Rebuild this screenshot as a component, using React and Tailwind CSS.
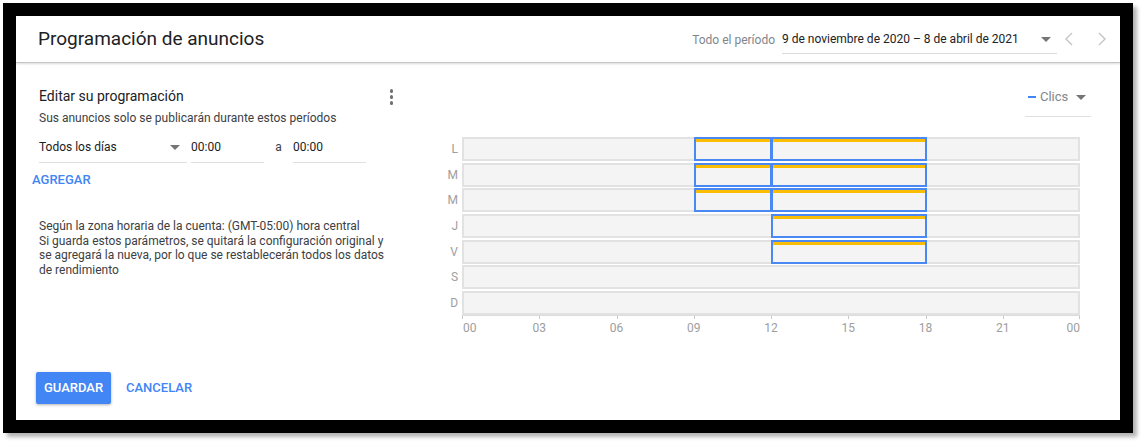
import React from "react";

const days = [
  { d: "L", mt: "mt-0", blocks: [[9, 12], [12, 18]] },
  { d: "M", mt: "mt-[2px]", blocks: [[9, 12], [12, 18]] },
  { d: "M", mt: "mt-[1px]", blocks: [[9, 12], [12, 18]] },
  { d: "J", mt: "mt-[2px]", blocks: [[12, 18]] },
  { d: "V", mt: "mt-[2px]", blocks: [[12, 18]] },
  { d: "S", mt: "mt-[1px]", blocks: [] },
  { d: "D", mt: "mt-[2px]", blocks: [] },
];

const ticks = [0, 3, 6, 9, 12, 15, 18, 21, 24];

function Caret({ className = "" }) {
  return (
    <svg width="10" height="5" viewBox="0 0 10 5" className={className}>
      <path d="M0 0 L10 0 L5 5 Z" fill="#757575" />
    </svg>
  );
}

function Chevron({ dir }) {
  return (
    <svg width="24" height="24" viewBox="0 0 24 24">
      {dir === "left" ? (
        <polyline points="15,6 9,12 15,18" fill="none" stroke="#c4c4c4" strokeWidth="1.4" />
      ) : (
        <polyline points="9,6 15,12 9,18" fill="none" stroke="#c4c4c4" strokeWidth="1.4" />
      )}
    </svg>
  );
}

export default function App() {
  return (
    <div className="w-[1143px] h-[443px] bg-white pt-[3px] pl-[3px]" style={{ fontFamily: "Roboto, 'Liberation Sans', sans-serif" }}>
      <div className="w-[1130px] h-[430px] bg-black p-[13px] shadow-[4px_4px_4px_rgba(0,0,0,0.3)]">
        <div className="w-[1104px] h-[404px] bg-white flex flex-col">
          {/* Header */}
          <div className="h-[47px] flex items-center border-b border-[#c6c6c6] shadow-[0_1px_2px_rgba(0,0,0,0.15)] pl-[22px] pr-[6px] shrink-0">
            <div className="text-[19px] leading-[24px] text-[#202124] flex-1">Programación de anuncios</div>
            <div className="text-[12px] leading-[16px] text-[#80868b] mt-[1px]">Todo el período</div>
            <div className="ml-[7px] w-[275px] flex items-center pb-[6px] border-b border-[#dadce0] mt-[7px] pr-[6px]">
              <span className="text-[12px] leading-[16px] text-[#202124] flex-1">9 de noviembre de 2020 – 8 de abril de 2021</span>
              <Caret />
            </div>
            <div className="flex items-center gap-[9px] ml-0">
              <Chevron dir="left" />
              <Chevron dir="right" />
            </div>
          </div>

          {/* Body */}
          <div className="flex flex-1">
            {/* Left column */}
            <div className="w-[384px] pl-[23px] pr-[5px] flex flex-col">
              <div className="mt-[23px] flex items-center justify-between">
                <div className="text-[14px] leading-[20px] text-[#202124]">Editar su programación</div>
                <div className="flex flex-col gap-[2.5px] mt-[2px] mr-[2px]">
                  <span className="w-[3.5px] h-[3.5px] rounded-full bg-[#6f6f6f]" />
                  <span className="w-[3.5px] h-[3.5px] rounded-full bg-[#6f6f6f]" />
                  <span className="w-[3.5px] h-[3.5px] rounded-full bg-[#6f6f6f]" />
                </div>
              </div>
              <div className="mt-[4px] text-[12px] leading-[16px] text-[#3c4043]">Sus anuncios solo se publicarán durante estos períodos</div>

              <div className="mt-[12px] flex items-end text-[12px] leading-[18px] text-[#202124]">
                <div className="w-[148px] flex items-center pb-[6px] border-b border-[#e0e0e0] pr-[7px]">
                  <span className="flex-1">Todos los días</span>
                  <Caret />
                </div>
                <div className="ml-[4px] w-[73px] pb-[6px] border-b border-[#e0e0e0]">00:00</div>
                <div className="w-[29px] pb-[7px] text-center text-[#3c4043]">a</div>
                <div className="w-[73px] pb-[6px] border-b border-[#e0e0e0]">00:00</div>
              </div>

              <div className="mt-[9px] -ml-[7px] text-[13px] leading-[16px] font-medium text-[#4285f4]">AGREGAR</div>

              <div className="mt-[31px] text-[12px] leading-[14.5px] text-[#3c4043]">
                Según la zona horaria de la cuenta: (GMT-05:00) hora central
                <br />
                Si guarda estos parámetros, se quitará la configuración original y
                <br />
                se agregará la nueva, por lo que se restablecerán todos los datos
                <br />
                de rendimiento
              </div>
            </div>

            {/* Chart */}
            <div className="flex-1 flex flex-col pl-[40px] pr-[40px]">
              <div className="flex justify-end -mr-[11px] mt-[25px]">
                <div className="w-[66px] flex items-center pb-[10px] border-b border-[#e0e0e0] pl-[3px]">
                  <span className="w-[8px] h-[2.5px] bg-[#4285f4] mr-[4px]" />
                  <span className="text-[13px] leading-[18px] text-[#80868b]">Clics</span>
                  <Caret className="ml-[8px]" />
                </div>
              </div>

              <div className="mt-[20px] flex flex-col">
                {days.map((row, i) => (
                  <div key={i} className={`flex items-center ${row.mt}`}>
                    <div className="w-[18px] text-right text-[12px] leading-[14px] text-[#9e9e9e] mr-[4px]">{row.d}</div>
                    <div className="relative flex-1 h-[24px] border-2 border-[#e2e2e2] bg-[#f4f4f4]">
                      <div className="absolute -inset-[2px]">
                        {row.blocks.map(([s, e], j) => (
                          <div
                            key={j}
                            className="absolute top-0 bottom-0 border-2 border-[#4a89f3] flex flex-col"
                            style={{ left: `${(s / 24) * 100}%`, width: `calc(${((e - s) / 24) * 100}% + 1px)` }}
                          >
                            <div className="h-[3px] shrink-0 bg-[#fbbc04]" />
                          </div>
                        ))}
                      </div>
                    </div>
                  </div>
                ))}
              </div>

              {/* Axis */}
              <div className="flex">
                <div className="w-[22px]" />
                <div className="relative flex-1 h-[24px] border-t border-[#dcdcdc]">
                  {ticks.map((t, i) => (
                    <React.Fragment key={i}>
                      <div className="absolute top-0 w-px h-[3px] bg-[#c8c8c8]" style={{ left: `calc(${(t / 24) * 100}% - ${t === 24 ? 1 : 0}px)` }} />
                      <div
                        className="absolute top-[5px] text-[12px] leading-[14px] text-[#9e9e9e]"
                        style={{
                          left: `${(t / 24) * 100}%`,
                          transform: t === 0 ? "translateX(1px)" : t === 24 ? "translateX(-100%)" : "translateX(-50%)",
                        }}
                      >
                        {String(t % 24).padStart(2, "0")}
                      </div>
                    </React.Fragment>
                  ))}
                </div>
              </div>
            </div>
          </div>

          {/* Footer */}
          <div className="flex items-center pl-[20px] pb-[16px] shrink-0">
            <button className="w-[75px] h-[32px] rounded-[2px] bg-[#4285f4] text-white text-[13px] font-medium shadow-[0_1px_3px_rgba(0,0,0,0.3)]">GUARDAR</button>
            <button className="ml-[15px] text-[13px] font-medium text-[#4285f4]">CANCELAR</button>
          </div>
        </div>
      </div>
    </div>
  );
}
